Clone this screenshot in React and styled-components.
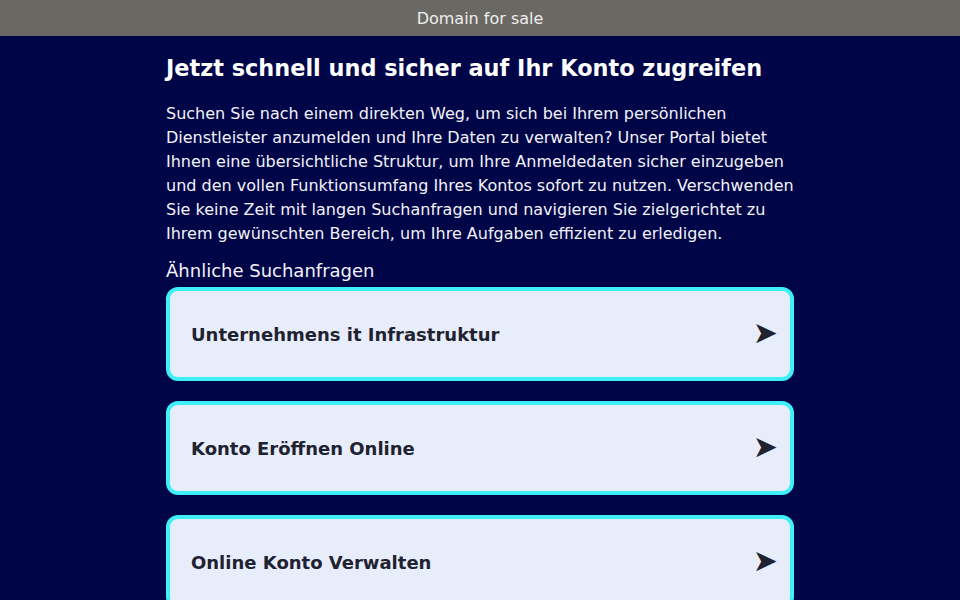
import React from "react";
import styled, { createGlobalStyle } from "styled-components";

const Global = createGlobalStyle`
  html, body { margin: 0; padding: 0; background: #000548; }
  body { font-family: "DejaVu Sans", "Liberation Sans", sans-serif; }
`;

const Page = styled.div`
  min-height: 600px;
  background: #000548;
  color: #f2f2f8;
`;

const TopBar = styled.div`
  height: 36px;
  background: #6a6863;
  color: #eeeeee;
  font-size: 16px;
  display: flex;
  align-items: center;
  justify-content: center;
`;

const Main = styled.main`
  width: 628px;
  margin: 0 auto;
  padding-top: 19px;
`;

const Title = styled.h1`
  margin: 0;
  font-size: 22.4px;
  line-height: 26px;
  font-weight: bold;
  color: #ffffff;
`;

const Text = styled.p`
  margin: 21px 0 0;
  font-size: 16px;
  line-height: 24px;
  color: #f2f2f8;
`;

const SubTitle = styled.h2`
  margin: 14px 0 5px;
  font-size: 18px;
  line-height: 22px;
  font-weight: normal;
  color: #f2f2f8;
`;

const List = styled.div`
  display: flex;
  flex-direction: column;
  gap: 20px;
`;

const Card = styled.a`
  display: flex;
  align-items: center;
  justify-content: space-between;
  box-sizing: border-box;
  height: 94px;
  padding: 0 12px 0 21px;
  border: 4px solid #3ef0f8;
  border-radius: 12px;
  background: #e8edfc;
  color: #1f2230;
  text-decoration: none;
  font-size: 18px;
  font-weight: bold;
`;

const Arrow = styled.span`
  font-size: 30px;
  line-height: 1;
  color: #1f2230;
  font-weight: normal;
  margin-top: -2px;
`;

const items = [
  "Unternehmens it Infrastruktur",
  "Konto Eröffnen Online",
  "Online Konto Verwalten",
];

export default function App() {
  return (
    <>
      <Global />
      <Page>
        <TopBar>Domain for sale</TopBar>
        <Main>
          <Title>Jetzt schnell und sicher auf Ihr Konto zugreifen</Title>
          <Text>
            Suchen Sie nach einem direkten Weg, um sich bei Ihrem persönlichen
            Dienstleister anzumelden und Ihre Daten zu verwalten? Unser Portal
            bietet Ihnen eine übersichtliche Struktur, um Ihre Anmeldedaten
            sicher einzugeben und den vollen Funktionsumfang Ihres Kontos sofort
            zu nutzen. Verschwenden Sie keine Zeit mit langen Suchanfragen und
            navigieren Sie zielgerichtet zu Ihrem gewünschten Bereich, um Ihre
            Aufgaben effizient zu erledigen.
          </Text>
          <SubTitle>Ähnliche Suchanfragen</SubTitle>
          <List>
            {items.map((t) => (
              <Card key={t} href="#">
                <span>{t}</span>
                <Arrow>➤</Arrow>
              </Card>
            ))}
          </List>
        </Main>
      </Page>
    </>
  );
}
